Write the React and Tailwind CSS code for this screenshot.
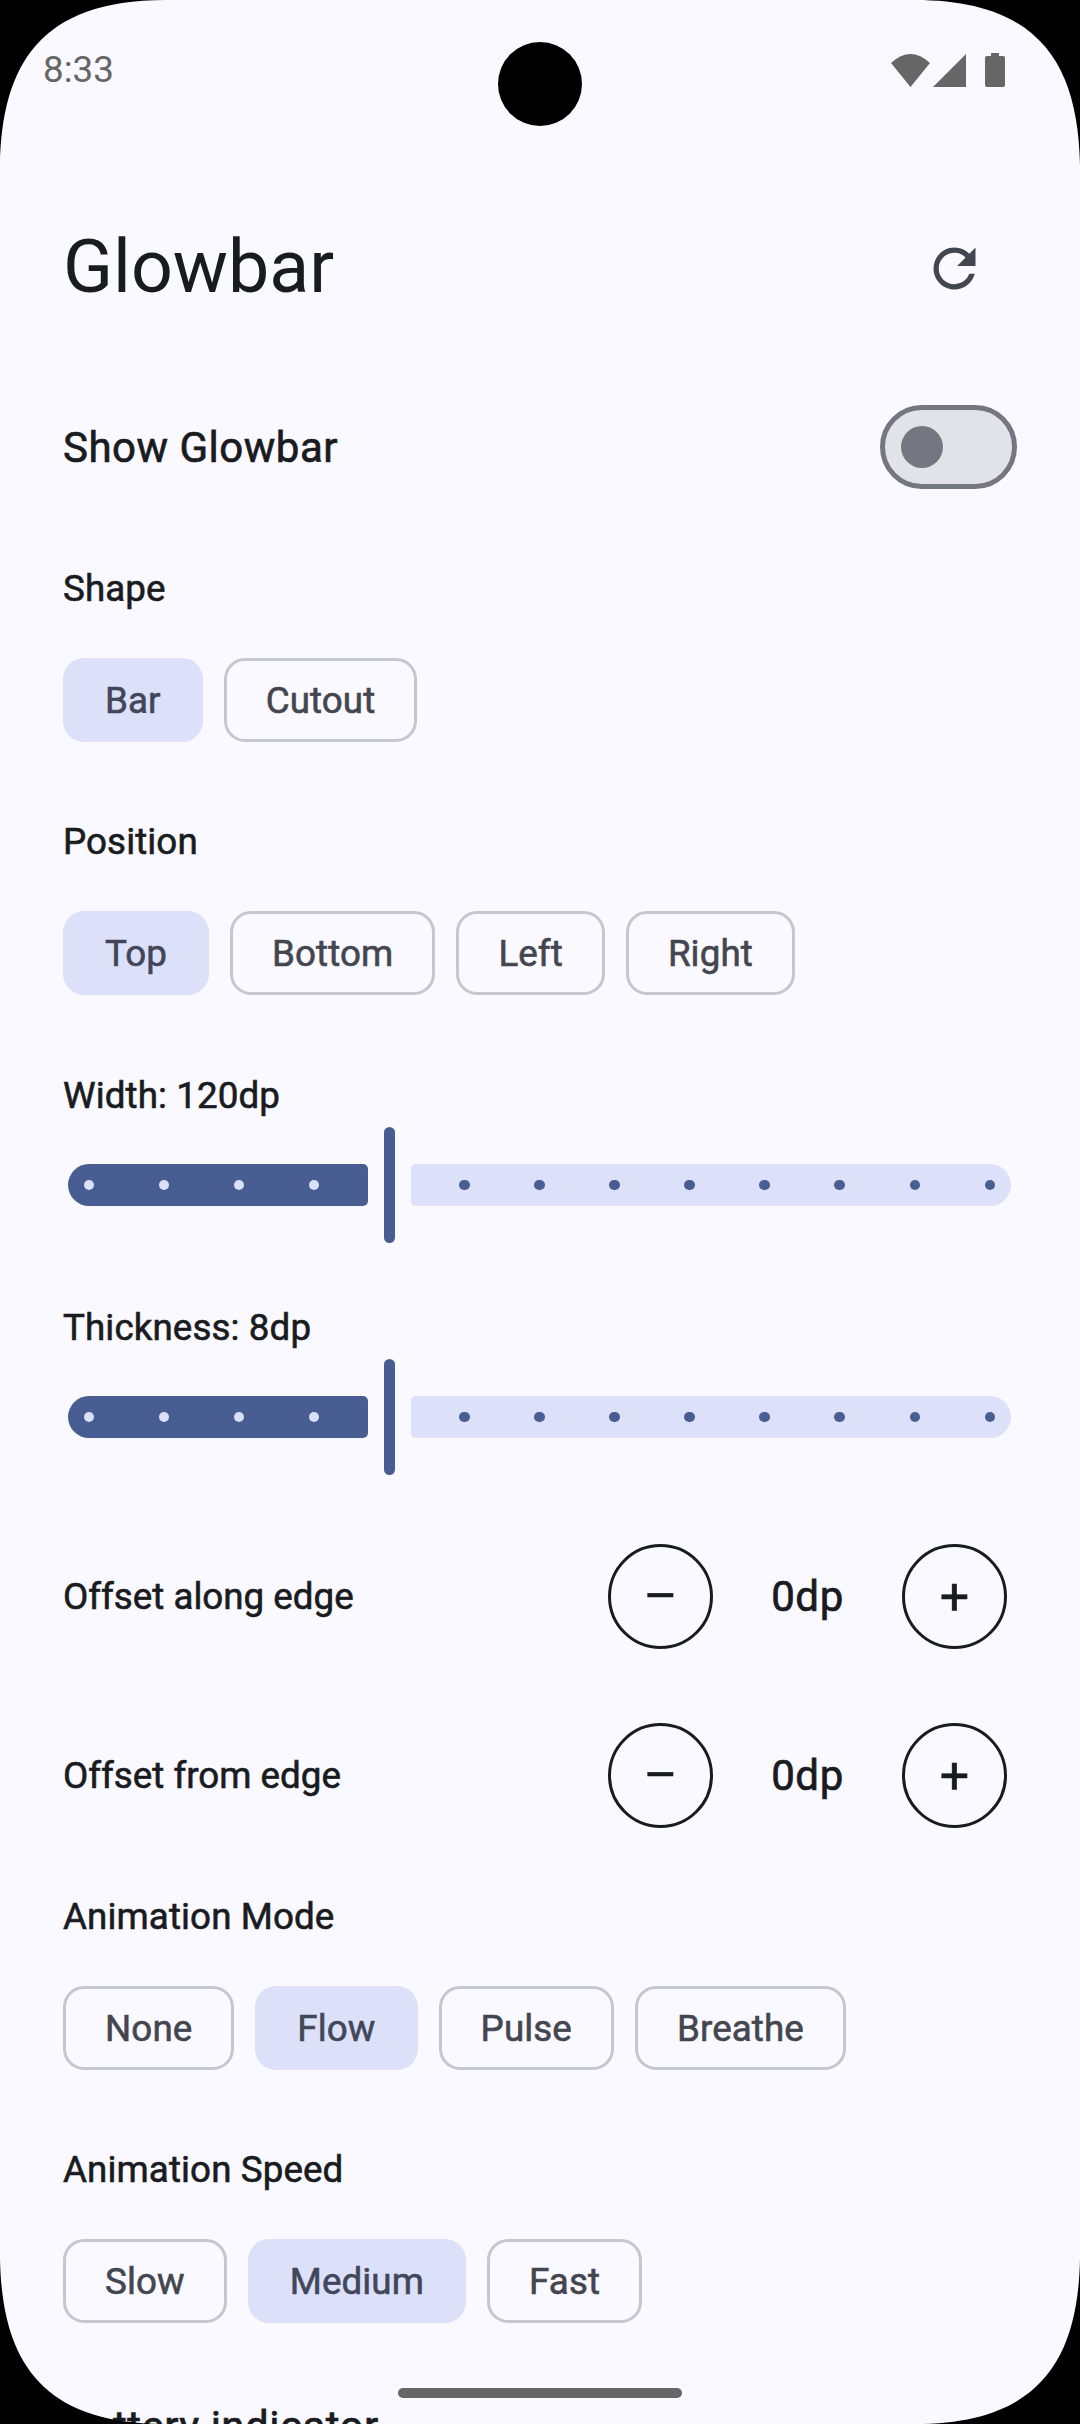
const font = { fontFamily: 'Roboto, sans-serif' };

function Chip({ label, selected }) {
  return (
    <div
      className={
        selected
          ? 'flex h-[84px] items-center rounded-[21px] bg-[#dce1f9] px-[42px] pt-[2px] text-[36.75px] leading-none font-normal tracking-[0.1px] text-[#41465a] [-webkit-text-stroke:0.6px_#41465a]'
          : 'flex h-[84px] items-center rounded-[21px] border-[3px] border-[#c5c6d0] px-[39px] pt-[2px] text-[36.75px] leading-none font-normal tracking-[0.1px] text-[#44464f] [-webkit-text-stroke:0.6px_#44464f]'
      }
    >
      {label}
    </div>
  );
}

function Label({ children, className }) {
  return (
    <div className={`flex h-[50px] items-center pt-[3px] text-[36.75px] leading-none font-normal tracking-[0.1px] text-[#1a1b20] [-webkit-text-stroke:0.6px_#1a1b20] ${className}`}>
      {children}
    </div>
  );
}

function ChipGroup({ title, items, selected, className, chipsClass }) {
  return (
    <div>
      <Label className={className}>{title}</Label>
      <div className={`flex gap-[21px] ${chipsClass}`}>
        {items.map((t) => (
          <Chip key={t} label={t} selected={t === selected} />
        ))}
      </div>
    </div>
  );
}

function Dots({ n, color }) {
  return (
    <div className="flex gap-[64.6px]">
      {Array.from({ length: n }).map((_, i) => (
        <div key={i} className={`h-[10.5px] w-[10.5px] rounded-full ${color}`} />
      ))}
    </div>
  );
}

function Slider() {
  return (
    <div className="mt-[7px] flex h-[116px] items-center pl-[5px]">
      <div className="flex h-[42px] w-[300px] items-center rounded-l-[21px] rounded-r-[5px] bg-[#485d92] pl-[15.5px]">
        <Dots n={4} color="bg-[#dce1f9]" />
      </div>
      <div className="ml-[16px] h-[116px] w-[10.5px] rounded-full bg-[#485d92]" />
      <div className="ml-[16px] flex h-[42px] w-[600.5px] items-center rounded-l-[5px] rounded-r-[21px] bg-[#dce1f9] pl-[48.5px]">
        <Dots n={8} color="bg-[#485d92]" />
      </div>
    </div>
  );
}

function StepBtn({ plus }) {
  return (
    <div className="flex h-[105px] w-[105px] items-center justify-center rounded-full border-[3px] border-[#1a1b20] text-[52px] leading-none font-normal text-[#1a1b20] [-webkit-text-stroke:0.4px_#1a1b20]">
      {plus ? '+' : '–'}
    </div>
  );
}

function Stepper({ label, className }) {
  return (
    <div className={`flex h-[105px] items-center ${className}`}>
      <div className="w-[545px] pt-[2px] text-[36.75px] leading-none font-normal text-[#1a1b20] [-webkit-text-stroke:0.6px_#1a1b20]">{label}</div>
      <StepBtn />
      <div className="w-[189px] text-center text-[42px] leading-none font-normal tracking-[0.6px] text-[#1a1b20] [-webkit-text-stroke:0.7px_#1a1b20]">0dp</div>
      <StepBtn plus />
    </div>
  );
}

function Corner({ className }) {
  return (
    <svg width="165" height="165" viewBox="0 0 165 165" className={`absolute ${className}`}>
      <path d="M0 0 H165 C40 0 2 65 0 165 Z" fill="#000000" />
    </svg>
  );
}

export default function App() {
  return (
    <div className="relative h-[2424px] w-[1080px] overflow-hidden bg-[#f9f9ff]" style={font}>
      <div className="absolute top-[42px] left-[498px] h-[84px] w-[84px] rounded-full bg-black" />

      <div className="flex h-[140px] items-center justify-between pr-[75px] pl-[43px]">
        <div className="text-[36.75px] leading-none font-normal text-[#666666]">8:33</div>
        <div className="flex items-center">
          <svg width="39" height="33" viewBox="0 0 39 33">
            <path d="M0 9 Q19.5 -9 39 9 L19.5 33 Z" fill="#666666" />
          </svg>
          <svg width="33" height="33" viewBox="0 0 33 33" className="ml-[3px]">
            <path d="M0 33 L33 0 V33 Z" fill="#666666" />
          </svg>
          <svg width="20" height="34" viewBox="0 0 20 34" className="ml-[19px]">
            <path d="M6 0 H14 V3 H18 Q20 3 20 5 V32 Q20 34 18 34 H2 Q0 34 0 32 V5 Q0 3 2 3 H6 Z" fill="#666666" />
          </svg>
        </div>
      </div>

      <div className="px-[63px]">
        <div className="mt-[80px] flex h-[96px] items-center justify-between">
          <div className="text-[73.5px] leading-none font-normal text-[#1a1b20]">Glowbar</div>
          <svg width="63" height="63" viewBox="0 0 24 24" className="mr-[31px]" fill="#44464f">
            <path d="M17.65 6.35A7.958 7.958 0 0 0 12 4c-4.42 0-7.99 3.58-7.99 8s3.57 8 7.99 8c3.73 0 6.84-2.55 7.73-6h-2.08A5.99 5.99 0 0 1 12 18c-3.31 0-6-2.69-6-6s2.69-6 6-6c1.66 0 3.14.69 4.22 1.78L13 11h7V4l-2.35 2.35z" />
          </svg>
        </div>

        <div className="mt-[89px] flex h-[84px] items-center justify-between">
          <div className="pt-[2px] text-[42px] leading-none font-normal tracking-[0.5px] text-[#1a1b20] [-webkit-text-stroke:0.7px_#1a1b20]">Show Glowbar</div>
          <div className="flex h-[84px] w-[137px] items-center rounded-full border-[5.25px] border-[#74777f] bg-[#e2e2e9] pl-[15.75px]">
            <div className="h-[42px] w-[42px] rounded-full bg-[#74777f]" />
          </div>
        </div>

        <ChipGroup title="Shape" items={['Bar', 'Cutout']} selected="Bar" className="mt-[74px]" chipsClass="mt-[45px]" />
        <ChipGroup title="Position" items={['Top', 'Bottom', 'Left', 'Right']} selected="Top" className="mt-[74px]" chipsClass="mt-[45px]" />

        <Label className="mt-[75px]">Width: 120dp</Label>
        <Slider />
        <Label className="mt-[59px]">Thickness: 8dp</Label>
        <Slider />

        <Stepper label="Offset along edge" className="mt-[69px]" />
        <Stepper label="Offset from edge" className="mt-[74px]" />

        <ChipGroup title="Animation Mode" items={['None', 'Flow', 'Pulse', 'Breathe']} selected="Flow" className="mt-[63px]" chipsClass="mt-[45px]" />
        <ChipGroup title="Animation Speed" items={['Slow', 'Medium', 'Fast']} selected="Medium" className="mt-[74px]" chipsClass="mt-[45px]" />

        <div className="mt-[83px] text-[42px] leading-none font-normal tracking-[0.5px] text-[#1a1b20] [-webkit-text-stroke:0.7px_#1a1b20]">Battery indicator</div>
      </div>

      <div className="absolute top-[2388px] left-[398px] h-[10px] w-[284px] rounded-full bg-[#666666]" />

      <Corner className="top-0 left-0" />
      <Corner className="top-0 right-0 -scale-x-100" />
      <Corner className="bottom-0 left-0 -scale-y-100" />
      <Corner className="right-0 bottom-0 -scale-x-100 -scale-y-100" />
    </div>
  );
}
